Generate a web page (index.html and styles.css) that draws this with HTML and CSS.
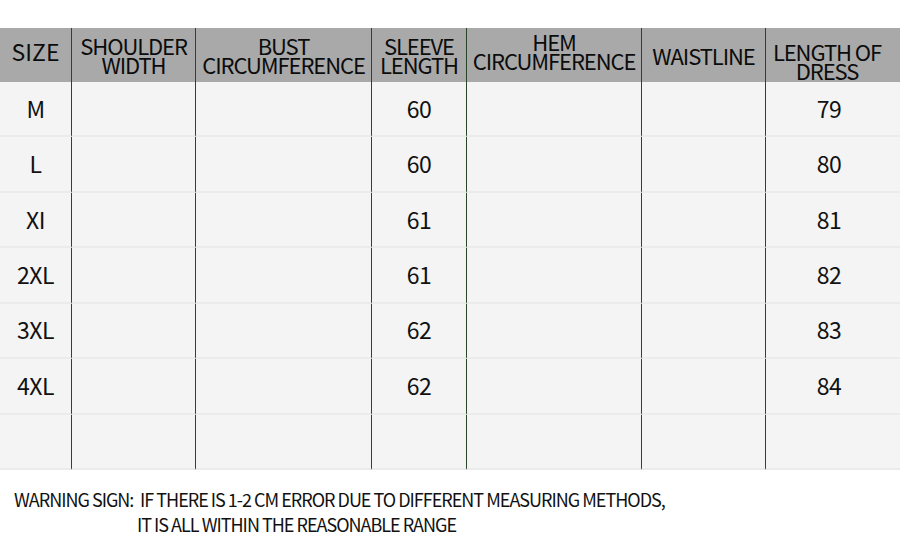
FILE: index.html
```html
<!DOCTYPE html>
<html>
<head>
<meta charset="utf-8">
<link rel="stylesheet" href="styles.css">
</head>
<body>
<div class="page">
  <div class="chart">
    <div class="cell head up4">SIZE</div>
    <div class="cell head">SHOULDER<br>WIDTH</div>
    <div class="cell head">BUST<br>CIRCUMFERENCE</div>
    <div class="cell head">SLEEVE<br>LENGTH</div>
    <div class="cell head up5">HEM<br>CIRCUMFERENCE</div>
    <div class="cell head">WAISTLINE</div>
    <div class="cell head down6">LENGTH OF<br>DRESS</div>

    <div class="cell">M</div><div class="cell"></div><div class="cell"></div><div class="cell">60</div><div class="cell"></div><div class="cell"></div><div class="cell">79</div>
    <div class="cell">L</div><div class="cell"></div><div class="cell"></div><div class="cell">60</div><div class="cell"></div><div class="cell"></div><div class="cell">80</div>
    <div class="cell">XI</div><div class="cell"></div><div class="cell"></div><div class="cell">61</div><div class="cell"></div><div class="cell"></div><div class="cell">81</div>
    <div class="cell">2XL</div><div class="cell"></div><div class="cell"></div><div class="cell">61</div><div class="cell"></div><div class="cell"></div><div class="cell">82</div>
    <div class="cell">3XL</div><div class="cell"></div><div class="cell"></div><div class="cell">62</div><div class="cell"></div><div class="cell"></div><div class="cell">83</div>
    <div class="cell">4XL</div><div class="cell"></div><div class="cell"></div><div class="cell">62</div><div class="cell"></div><div class="cell"></div><div class="cell">84</div>
    <div class="cell"></div><div class="cell"></div><div class="cell"></div><div class="cell"></div><div class="cell"></div><div class="cell"></div><div class="cell"></div>
  </div>
  <div class="note">
    <div class="label">WARNING SIGN:</div>
    <div class="lines">
      <div class="l1">IF THERE IS 1-2 CM ERROR DUE TO DIFFERENT MEASURING METHODS,</div>
      <div class="l2">IT IS ALL WITHIN THE REASONABLE RANGE</div>
    </div>
  </div>
</div>
</body>
</html>
```

FILE: styles.css
```css
html, body {
  margin: 0;
  padding: 0;
  background: #ffffff;
}
body {
  width: 900px;
  height: 538px;
  overflow: hidden;
  font-family: "Noto Sans CJK SC", "Noto Sans", sans-serif;
  color: #111111;
}
.page {
  padding-top: 28px;
}
.chart {
  display: grid;
  grid-template-columns: 72px 124px 176px 95px 175px 124px 134px;
  grid-template-rows: 54px repeat(7, 1fr);
  height: 442px;
}
.cell {
  display: flex;
  align-items: center;
  justify-content: center;
  text-align: center;
  background: #f4f4f4;
  border-bottom: 2px solid #ebebeb;
  border-right: 1px solid #2a462a;
  font-size: 23px;
  box-sizing: border-box;
  letter-spacing: -0.5px;
  padding-bottom: 2px;
}
.cell:nth-child(7n) {
  border-right: none;
  padding-right: 8px;
}
.cell.head {
  background: #a9a9a9;
  border-bottom: none;
  font-size: 22px;
  line-height: 19px;
  letter-spacing: -1.1px;
  padding-bottom: 0;
  color: #0c0c0c;
}
.cell.head.up4 { padding-bottom: 7px; font-size: 23px; letter-spacing: 0; }
.cell.head.up5 { padding-bottom: 9px; }
.cell.head.down6 { padding-top: 12px; padding-right: 12px; }
.note {
  display: flex;
  padding: 17px 0 0 14px;
  font-size: 18px;
  letter-spacing: -1px;
  line-height: 25px;
  color: #111111;
}
.label {
  width: 126px;
}
.lines .l2 {
  margin-left: -3px;
}
```
